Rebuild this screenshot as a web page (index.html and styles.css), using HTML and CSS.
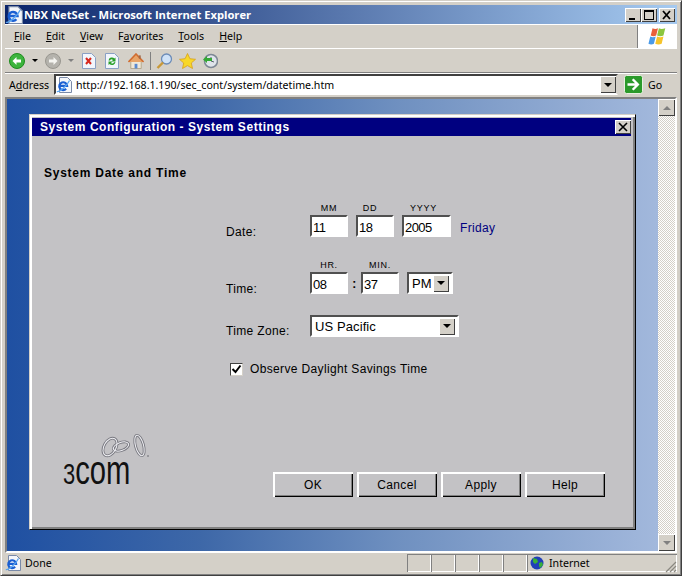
FILE: index.html
```html
<!DOCTYPE html>
<html lang="en">
<head>
    <meta charset="UTF-8">
    <meta name="viewport" content="width=device-width, initial-scale=1.0">
    <title>NBX NetSet - Microsoft Internet Explorer</title>
    <link rel="stylesheet" href="styles.css">
</head>
<body>
<svg class="defs" width="0" height="0">
    <defs>
        <symbol id="ie-page" viewBox="0 0 16 16">
            <path d="M3.500.5h8l4 4v11h-12z" fill="#f4f6fa" stroke="#7a8aa8"/>
            <path d="M3.300 8.800h7.800a3.900 3.900 0 1 0-1 3" fill="none" stroke="#1a5fd2" stroke-width="2.200"/>
            <path d="M.8 14.500C3 15.500 11 9 13.500 3.500" fill="none" stroke="#58a4f0" stroke-width="1.200"/>
        </symbol>
        <g id="rings" fill="none">
            <ellipse cx="10" cy="15" rx="6" ry="9.500" transform="rotate(30 10 15)"/>
            <ellipse cx="21" cy="14.500" rx="8" ry="4" transform="rotate(-20 21 14.500)"/>
            <ellipse cx="39.500" cy="13.500" rx="4" ry="10.500" transform="rotate(-15 39.500 13.500)"/>
        </g>
    </defs>
</svg>
<div class="window">
    <div class="titlebar">
        <svg class="title-icon" width="18" height="18"><use href="#ie-page"/></svg>
        <span class="title-text">NBX NetSet - Microsoft Internet Explorer</span>
        <div class="title-buttons">
            <span class="cap-btn"><svg width="14" height="12" viewBox="0 0 14 12"><path d="M3 9h6v2H3z"/></svg></span>
            <span class="cap-btn"><svg width="14" height="12" viewBox="0 0 14 12"><path d="M2 1h10v10H2zM3 3v7h8V3z" fill-rule="evenodd"/></svg></span>
            <span class="cap-btn cap-close"><svg width="14" height="12" viewBox="0 0 14 12"><path d="M3 2l7 8M10 2l-7 8" stroke="#000" stroke-width="1.800"/></svg></span>
        </div>
    </div>

    <div class="menubar">
        <div class="menu-items">
            <span><u>F</u>ile</span>
            <span><u>E</u>dit</span>
            <span><u>V</u>iew</span>
            <span>F<u>a</u>vorites</span>
            <span><u>T</u>ools</span>
            <span><u>H</u>elp</span>
        </div>
        <div class="flag">
            <svg width="20" height="19" viewBox="0 0 22 20">
                <path d="M5 1c2 1 4 1 6 0l-2 8c-2 1-4 1-6 0z" fill="#e8603a"/>
                <path d="M12 1c2 1 4 1 7 0l-2 8c-2 1-5 1-7 0z" fill="#8cc63e"/>
                <path d="M2.500 10c2 1 4 1 6 0l-2 8c-2 1-4 1-6 0z" fill="#4a9ae8"/>
                <path d="M10 10c2 1 5 1 7 0l-2 8c-2 1-5 1-7 0z" fill="#f6c42a"/>
            </svg>
        </div>
    </div>

    <div class="toolbar">
        <svg class="tool tool-nav" width="16" height="16" viewBox="0 0 16 16">
            <circle cx="8" cy="8" r="7.500" fill="#3cb43c" stroke="#1e8a1e"/>
            <path d="M3.500 8l4-4v2.500h4.500v3H7.500V12z" fill="#fff"/>
        </svg>
        <span class="drop-arrow"></span>
        <svg class="tool tool-nav" width="16" height="16" viewBox="0 0 16 16">
            <circle cx="8" cy="8" r="7.500" fill="#b4b2ac" stroke="#98968f"/>
            <path d="M12.500 8l-4-4v2.500H4v3h4.500V12z" fill="#f4f4f0"/>
        </svg>
        <span class="drop-arrow drop-off"></span>
        <svg class="tool tool-doc" width="14" height="16" viewBox="0 0 14 16">
            <path d="M.5.500h9l4 4v11H.5z" fill="#f2f6fc" stroke="#8aa0c4"/>
            <path d="M4 5l5 6M9 5l-5 6" stroke="#d8281e" stroke-width="2"/>
        </svg>
        <svg class="tool tool-doc" width="14" height="16" viewBox="0 0 14 16">
            <path d="M.5.500h9l4 4v11H.5z" fill="#f2f6fc" stroke="#8aa0c4"/>
            <path d="M3.500 7.500a3.500 3.500 0 0 1 6-2l1-1v4h-4l1.500-1.500a2 2 0 0 0-3 .5z" fill="#2aa02a"/>
            <path d="M10.500 9a3.500 3.500 0 0 1-6 2l-1 1V8.500h4L6 10a2 2 0 0 0 3-.8z" fill="#2aa02a"/>
        </svg>
        <svg class="tool" width="16" height="16" viewBox="0 0 17 16">
            <path d="M3 8h11v8H3z" fill="#f0e8d8" stroke="#a89878" stroke-width=".8"/>
            <path d="M.5 9L8.500.5 16.500 9" fill="#e8a468" stroke="#d06c30" stroke-width="1.600"/>
            <path d="M7 11h3v5H7z" fill="#5a8ad0"/>
            <path d="M11.500 2h2v3.500h-2z" fill="#a06848"/>
        </svg>
        <span class="tool-sep"></span>
        <svg class="tool" width="17" height="16" viewBox="0 0 17 16">
            <circle cx="10.500" cy="6" r="5" fill="#cfe2f8" stroke="#6c8cb8" stroke-width="1.300"/>
            <path d="M7 9.500L1.500 15" stroke="#c89838" stroke-width="2.400"/>
        </svg>
        <svg class="tool" width="17" height="16" viewBox="0 0 17 16">
            <path d="M8.500.5l2.400 5.200 5.600.6-4.200 3.700 1.200 5.500-5-2.900-5 2.900 1.200-5.500L.5 6.300l5.600-.6z" fill="#f8d828" stroke="#d8a018" stroke-width=".8"/>
        </svg>
        <svg class="tool" width="16" height="16" viewBox="0 0 16 16">
            <circle cx="9" cy="8" r="6.500" fill="#dfe4ea" stroke="#7d8794" stroke-width="1.500"/>
            <path d="M9 4v4l3 1" fill="none" stroke="#56606c"/>
            <path d="M1 6.500l4-3.500v2h5v3H5v2z" fill="#35a835"/>
        </svg>
    </div>

    <div class="addressbar">
        <span class="address-label">A<u>d</u>dress</span>
        <div class="address-box">
            <svg class="page-icon" width="16" height="16"><use href="#ie-page"/></svg>
            <span class="address-url">http://192.168.1.190/sec_cont/system/datetime.htm</span>
            <span class="combo-btn"><i class="arrow-down"></i></span>
        </div>
        <div class="go">
            <svg width="19" height="19" viewBox="0 0 19 19">
                <rect x=".5" y=".5" width="18" height="18" rx="2" fill="#2b9a2b" stroke="#e8f0e0"/>
                <path d="M3.500 8.300h7.500L7.800 5l1.800-1.500 5.900 6-5.900 6-1.800-1.500 3.200-3.300H3.500z" fill="#fff"/>
            </svg>
            <span>Go</span>
        </div>
    </div>

    <div class="viewport">
        <div class="canvas">
            <div class="dialog">
                <div class="dialog-title">
                    <span>System Configuration - System Settings</span>
                    <span class="dialog-close"><svg width="12" height="10" viewBox="0 0 12 10"><path d="M2 1l8 8M10 1l-8 8" stroke="#000" stroke-width="1.600"/></svg></span>
                </div>
                <h2 class="section-title">System Date and Time</h2>

                <form class="config-form">
                    <div class="field date-field">
                        <label class="field-label">Date:</label>
                        <div class="unit unit-short"><span class="hint">MM</span><input class="box" type="text" value="11"></div>
                        <div class="unit unit-short"><span class="hint hint-dd">DD</span><input class="box" type="text" value="18"></div>
                        <div class="unit unit-long"><span class="hint hint-yyyy">YYYY</span><input class="box" type="text" value="2005"></div>
                        <span class="weekday">Friday</span>
                    </div>
                    <div class="field time-field">
                        <label class="field-label">Time:</label>
                        <div class="unit unit-short"><span class="hint">HR.</span><input class="box" type="text" value="08"></div>
                        <span class="colon">:</span>
                        <div class="unit unit-short"><span class="hint">MIN.</span><input class="box" type="text" value="37"></div>
                        <div class="pick pick-ampm">PM<span class="combo-btn"><i class="arrow-down"></i></span></div>
                    </div>
                    <div class="field zone-field">
                        <label class="field-label">Time Zone:</label>
                        <div class="pick pick-zone">US Pacific<span class="combo-btn"><i class="arrow-down"></i></span></div>
                    </div>
                    <div class="check-row">
                        <span class="check"><svg width="11" height="11" viewBox="0 0 11 11"><path d="M1.500 5l3 3 5-6.500" fill="none" stroke="#000" stroke-width="2"/></svg></span>
                        <span>Observe Daylight Savings Time</span>
                    </div>
                </form>

                <div class="dialog-foot">
                    <div class="logo">
                        <svg class="logo-rings" width="50" height="26" viewBox="0 0 50 26">
                            <use href="#rings" stroke="#77777f" stroke-width="2.800"/>
                            <use href="#rings" stroke="#eeeef2" stroke-width="1"/>
                            <circle cx="48" cy="24" r="1" fill="#88888e"/>
                        </svg>
                        <div class="logo-word"><span class="logo-three">3</span>com</div>
                    </div>
                    <div class="dialog-buttons">
                        <button type="button" class="btn">OK</button>
                        <button type="button" class="btn">Cancel</button>
                        <button type="button" class="btn">Apply</button>
                        <button type="button" class="btn">Help</button>
                    </div>
                </div>
            </div>
        </div>
        <div class="scrollbar">
            <span class="scroll-btn"><i class="arrow-up"></i></span>
            <span class="scroll-btn"><i class="arrow-down arrow-gray"></i></span>
        </div>
    </div>

    <div class="statusbar">
        <svg class="page-icon" width="16" height="16"><use href="#ie-page"/></svg>
        <span class="status-text">Done</span>
        <span class="panel"></span><span class="panel"></span><span class="panel"></span>
        <span class="panel"></span><span class="panel"></span>
        <span class="panel panel-zone">
            <svg width="14" height="14" viewBox="0 0 14 14">
                <circle cx="7" cy="7" r="6.500" fill="#1f3fb8"/>
                <path d="M3 2l4 1 1 3-3 2-2-2zM9 7l3-1 1 3-3 3-1-2z" fill="#38b038"/>
            </svg>
            Internet
        </span>
        <svg class="grip" width="12" height="12" viewBox="0 0 12 12">
            <path d="M11 1L1 11M11 5l-6 6M11 9l-2 2" stroke="#8a8880" stroke-width="1.200"/>
        </svg>
    </div>
</div>
</body>
</html>
```

FILE: styles.css
```css
* {
    box-sizing: border-box;
}
body {
    margin: 0;
    width: 682px;
    height: 576px;
    overflow: hidden;
    font-family: "Liberation Sans", Arial, sans-serif;
    font-size: 12px;
    color: #000;
}
.defs {
    display: block;
    height: 0;
}
.window {
    width: 682px;
    height: 576px;
    display: flex;
    flex-direction: column;
    padding: 4px 4px 2px;
    background-color: #d4d0c8;
    border: 1px solid;
    border-color: #d4d0c8 #404040 #404040 #d4d0c8;
    box-shadow: inset 1px 1px 0 #fff, inset -1px -1px 0 #808080;
}

/* title bar */
.titlebar {
    height: 19px;
    flex: none;
    display: flex;
    align-items: center;
    background: linear-gradient(90deg, #0a246a, #a6caf0);
    color: #fff;
}
.title-icon {
    flex: none;
}
.title-text {
    margin-left: 1px;
    font-family: "Open Sans", sans-serif;
    font-weight: 700;
    font-size: 11.2px;
}
.title-buttons {
    margin-left: auto;
    margin-right: 2px;
    display: flex;
}
.cap-btn {
    width: 16px;
    height: 14px;
    display: flex;
    align-items: center;
    justify-content: center;
    background-color: #d4d0c8;
    box-shadow: inset 1px 1px 0 #fff, inset -1px -1px 0 #404040;
}
.cap-close {
    margin-left: 2px;
}

/* menu bar */
.menubar {
    height: 25px;
    flex: none;
    display: flex;
    align-items: stretch;
    justify-content: space-between;
    border-top: 1px solid #fff;
    border-bottom: 1px solid #fff;
    font-family: "Noto Sans", sans-serif;
    font-size: 10.6px;
}
.menu-items {
    flex: 1;
    display: flex;
    align-items: center;
    gap: 15px;
    padding: 0 0 2px 9px;
    border-right: 1px solid #808080;
}
.flag {
    width: 39px;
    display: flex;
    align-items: center;
    justify-content: center;
    background-color: #fff;
}

/* toolbar */
.toolbar {
    height: 24px;
    flex: none;
    display: flex;
    align-items: center;
    padding-left: 4px;
    border-bottom: 1px solid #808080;
}
.tool {
    flex: none;
    margin-right: 6px;
}
.tool-nav {
    margin-right: 7px;
}
.tool-doc {
    margin-right: 9px;
}
.drop-arrow {
    width: 0;
    height: 0;
    margin-right: 7px;
    border-left: 3px solid transparent;
    border-right: 3px solid transparent;
    border-top: 3px solid #000;
}
.drop-off {
    margin-right: 8px;
    border-top-color: #808080;
}
.tool-sep {
    width: 1px;
    height: 18px;
    margin-right: 5px;
    background-color: #808080;
}

/* address bar */
.addressbar {
    height: 24px;
    flex: none;
    display: flex;
    align-items: center;
    padding-bottom: 2px;
    font-family: "Noto Sans", sans-serif;
    font-size: 10.6px;
    border-top: 1px solid #fff;
}
.address-label {
    width: 49px;
    padding-left: 4px;
}
.address-box {
    width: 564px;
    height: 21px;
    display: flex;
    align-items: center;
    background-color: #fff;
    border: 2px solid;
    border-color: #404040 #d4d0c8 #fff #404040;
}
.page-icon {
    flex: none;
}
.address-url {
    margin-left: 4px;
    flex: 1;
}
.go {
    display: flex;
    align-items: center;
    gap: 5px;
    margin-left: 6px;
}

/* combo and scroll buttons */
.combo-btn {
    width: 16px;
    height: 17px;
    flex: none;
    display: flex;
    align-items: center;
    justify-content: center;
    background-color: #d4d0c8;
    box-shadow: inset 1px 1px 0 #fff, inset -1px -1px 0 #404040;
}
.arrow-down {
    width: 0;
    height: 0;
    border-left: 4px solid transparent;
    border-right: 4px solid transparent;
    border-top: 4px solid #000;
}
.arrow-up {
    width: 0;
    height: 0;
    border-left: 4px solid transparent;
    border-right: 4px solid transparent;
    border-bottom: 4px solid #808080;
}
.arrow-gray {
    border-top-color: #808080;
}

/* page area */
.viewport {
    flex: 1;
    min-height: 0;
    display: flex;
    border: 2px solid;
    border-color: #808080 #fff #fff #808080;
    box-shadow: inset 1px 1px 0 #404040;
}
.canvas {
    flex: 1;
    padding: 15px 0 0 22px;
    background: linear-gradient(90deg, #1f50a2 0%, #3e68a8 30%, #6f90c0 60%, #a2b8dc 100%);
}
.scrollbar {
    width: 17px;
    display: flex;
    flex-direction: column;
    justify-content: space-between;
    background-color: #eee;
    background-image: repeating-conic-gradient(#d4d0c8 0 25%, #fff 0 50%);
    background-size: 2px 2px;
}
.scroll-btn {
    height: 17px;
    display: flex;
    align-items: center;
    justify-content: center;
    background-color: #d4d0c8;
    box-shadow: inset 1px 1px 0 #fff, inset -1px -1px 0 #404040;
}

/* dialog */
.dialog {
    width: 607px;
    height: 416px;
    display: flex;
    flex-direction: column;
    padding: 3px 3px 3px 2px;
    background-color: #c3c2c5;
    border: 1px solid;
    border-color: #d4d0c8 #000 #000 #d4d0c8;
    box-shadow: inset 2px 2px 0 #fff, inset -2px -2px 0 #808080;
    letter-spacing: .35px;
}
.dialog-title {
    height: 18px;
    margin-right: 1px;
    flex: none;
    display: flex;
    align-items: center;
    justify-content: space-between;
    padding-left: 8px;
    background-color: #000080;
    color: #fff;
    font-weight: 700;
    letter-spacing: .55px;
}
.dialog-close {
    width: 16px;
    height: 14px;
    display: flex;
    align-items: center;
    justify-content: center;
    background-color: #d4d0c8;
    box-shadow: inset 1px 1px 0 #fff, inset -1px -1px 0 #404040;
}
.section-title {
    margin: 30px 0 0 12px;
    font-size: 12px;
    font-weight: 700;
    letter-spacing: .75px;
}

/* form */
.config-form {
    margin: 22px 0 0 194px;
    flex: 1;
}
.field {
    display: flex;
    align-items: flex-end;
}
.field-label {
    width: 84px;
    flex: none;
    margin-bottom: -2px;
}
.unit {
    display: flex;
    flex-direction: column;
    align-items: center;
    margin-right: 8px;
}
.unit-short {
    width: 38px;
}
.unit-long {
    width: 49px;
}
.hint {
    font-size: 9px;
    line-height: 12px;
    margin-bottom: 1px;
    letter-spacing: .7px;
}
.hint-dd {
    margin-right: 10px;
}
.hint-yyyy {
    margin-right: 6px;
}
.box {
    width: 100%;
    height: 22px;
    padding: 3px 1px 0;
    font: inherit;
    font-size: 13px;
    letter-spacing: -.6px;
    background-color: #fff;
    border: 2px solid;
    border-color: #505050 #fff #fff #505050;
    outline: none;
}
.weekday {
    color: #000080;
    margin: 0 0 2px 1px;
}
.time-field {
    margin-top: 22px;
}
.colon {
    width: 13px;
    margin-left: -8px;
    text-align: center;
    font-weight: 700;
    line-height: 20px;
}
.pick {
    height: 22px;
    display: flex;
    align-items: center;
    justify-content: space-between;
    padding: 0 2px 0 3px;
    background-color: #fff;
    border: 2px solid;
    border-color: #505050 #fff #fff #505050;
    font-size: 13px;
    letter-spacing: .1px;
}
.pick-ampm {
    width: 46px;
}
.pick-zone {
    width: 149px;
}
.zone-field {
    margin-top: 21px;
}
.zone-field .field-label {
    margin-bottom: -1px;
}
.check-row {
    display: flex;
    align-items: center;
    gap: 7px;
    margin: 25px 0 0 4px;
}
.check {
    width: 13px;
    height: 13px;
    display: flex;
    align-items: center;
    justify-content: center;
    background-color: #fff;
    border: 1px solid;
    border-color: #404040 #d4d0c8 #d4d0c8 #404040;
}

/* dialog bottom */
.dialog-foot {
    height: 94px;
    flex: none;
    display: flex;
    justify-content: space-between;
    padding: 0 27px 29px 31px;
}
.logo-rings {
    display: block;
    margin-left: 37px;
}
.logo-word {
    height: 24px;
    line-height: 24px;
    font-size: 40px;
    color: #111;
    letter-spacing: 0;
    transform: scaleX(.73);
    transform-origin: left;
}
.logo-three {
    font-size: 30px;
}
.dialog-buttons {
    display: flex;
    gap: 4px;
    align-self: flex-end;
}
.btn {
    width: 80px;
    height: 25px;
    font: inherit;
    letter-spacing: .35px;
    color: #000;
    background-color: #c3c2c5;
    border: none;
    box-shadow: inset 2px 2px 0 #fff, inset -1px -1px 0 #000, inset -2px -2px 0 #808080;
}

/* status bar */
.statusbar {
    height: 20px;
    flex: none;
    display: flex;
    align-items: center;
    font-family: "Noto Sans", sans-serif;
    font-size: 10.6px;
}
.status-text {
    flex: 1;
    margin-left: 4px;
}
.panel {
    width: 24px;
    height: 18px;
    box-shadow: inset 1px 1px 0 #808080, inset -1px -1px 0 #fff;
}
.panel-zone {
    width: 150px;
    display: flex;
    align-items: center;
    gap: 5px;
    padding-left: 3px;
}
.grip {
    margin-left: -12px;
    align-self: flex-end;
}
```
